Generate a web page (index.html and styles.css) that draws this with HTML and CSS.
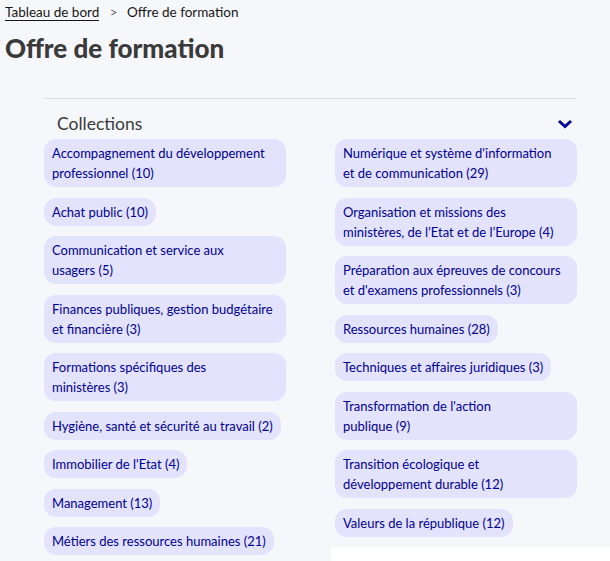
FILE: index.html
```html
<!DOCTYPE html>
<html lang="fr">
<head>
  <meta charset="UTF-8" />
  <meta name="viewport" content="width=device-width, initial-scale=1.0" />
  <title>Offre de formation</title>
  <link rel="stylesheet" href="styles.css">
</head>
<body>
  <nav class="breadcrumb">
    <a href="#">Tableau de bord</a>
    <span class="sep">&gt;</span>
    <span>Offre de formation</span>
  </nav>
  <h1>Offre de formation</h1>

  <section class="accordion">
    <div class="accordion-head">
      <h2>Collections</h2>
      <svg class="chevron" width="16" height="10" viewBox="0 0 16 10">
        <path d="M2 2 L8 7.5 L14 2" fill="none" stroke="#000091" stroke-width="3" />
      </svg>
    </div>
    <div class="columns">
      <ul class="tags">
        <li><a class="full" href="#">Accompagnement du développement professionnel (10)</a></li>
        <li><a href="#">Achat public (10)</a></li>
        <li><a class="full" href="#">Communication et service aux<br>usagers (5)</a></li>
        <li><a class="full" href="#">Finances publiques, gestion budgétaire et financière (3)</a></li>
        <li><a class="full" href="#">Formations spécifiques des<br>ministères (3)</a></li>
        <li><a href="#">Hygiène, santé et sécurité au travail (2)</a></li>
        <li><a href="#">Immobilier de l'Etat (4)</a></li>
        <li><a href="#">Management (13)</a></li>
        <li><a href="#">Métiers des ressources humaines (21)</a></li>
      </ul>
      <div class="right">
        <ul class="tags">
          <li><a class="full" href="#">Numérique et système d'information<br>et de communication (29)</a></li>
          <li><a class="full" href="#">Organisation et missions des ministères, de l’Etat et de l’Europe (4)</a></li>
          <li><a class="full" href="#">Préparation aux épreuves de concours et d'examens professionnels (3)</a></li>
          <li><a href="#">Ressources humaines (28)</a></li>
          <li><a href="#">Techniques et affaires juridiques (3)</a></li>
          <li><a class="full" href="#">Transformation de l'action<br>publique (9)</a></li>
          <li><a class="full" href="#">Transition écologique et développement durable (12)</a></li>
          <li><a href="#">Valeurs de la république (12)</a></li>
        </ul>
        <div class="card"></div>
      </div>
    </div>
  </section>
</body>
</html>
```

FILE: styles.css
```css
body {
  margin: 0;
  padding: 4px 5px 0;
  font-family: Lato, sans-serif;
  background-color: #f6f7fb;
  color: #161616;
}
.breadcrumb {
  font-size: 13.5px;
  line-height: 16px;
}
.breadcrumb a {
  color: #161616;
  text-decoration: none;
  border-bottom: 1px solid #161616;
}
.breadcrumb .sep {
  color: #666;
  margin: 0 6px 0 7px;
}
h1 {
  margin: 13px 0 0;
  font-size: 26px;
  line-height: 30px;
  font-weight: 900;
  color: #3a3a3a;
}
.accordion {
  margin: 35px 28px 0 39px;
  border-top: 1px solid #dddddd;
}
.accordion-head {
  display: flex;
  justify-content: space-between;
  align-items: center;
  padding: 14px 4px 0 13px;
}
h2 {
  margin: 0;
  font-size: 17.5px;
  font-weight: 400;
  line-height: 22px;
  color: #3a3a3a;
}
.columns {
  display: grid;
  grid-template-columns: 291px 242px;
  margin-top: 4px;
}
.tags {
  list-style: none;
  margin: 0;
  padding: 0;
}
.tags li {
  margin-bottom: 10.5px;
}
.tags a {
  display: block;
  width: fit-content;
  max-width: 226px;
  padding: 4px 8px;
  font-size: 13px;
  line-height: 20px;
  color: #000091;
  background: #e3e3fd;
  border-radius: 12px;
  text-decoration: none;
}
.tags a.full {
  width: 226px;
}
.card {
  margin: 0 -40px 0 -4px;
  height: 40px;
  background: #fff;
}
```
